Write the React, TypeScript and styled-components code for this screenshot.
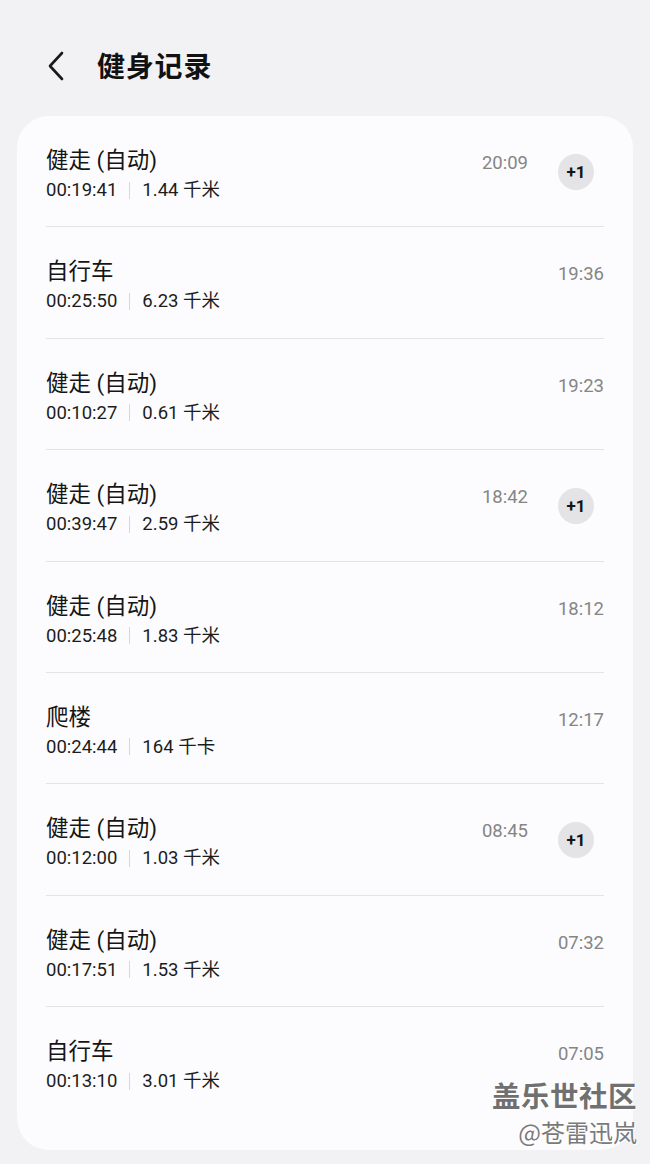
import React from 'react'
import styled, { createGlobalStyle } from 'styled-components'

type Workout = {
  name: string
  duration: string
  amount: string
  time: string
  extra?: number
}

const workouts: Workout[] = [
  { name: '健走 (自动)', duration: '00:19:41', amount: '1.44 千米', time: '20:09', extra: 1 },
  { name: '自行车', duration: '00:25:50', amount: '6.23 千米', time: '19:36' },
  { name: '健走 (自动)', duration: '00:10:27', amount: '0.61 千米', time: '19:23' },
  { name: '健走 (自动)', duration: '00:39:47', amount: '2.59 千米', time: '18:42', extra: 1 },
  { name: '健走 (自动)', duration: '00:25:48', amount: '1.83 千米', time: '18:12' },
  { name: '爬楼', duration: '00:24:44', amount: '164 千卡', time: '12:17' },
  { name: '健走 (自动)', duration: '00:12:00', amount: '1.03 千米', time: '08:45', extra: 1 },
  { name: '健走 (自动)', duration: '00:17:51', amount: '1.53 千米', time: '07:32' },
  { name: '自行车', duration: '00:13:10', amount: '3.01 千米', time: '07:05' },
]

const App = () => (
  <Page>
    <GlobalStyle />
    <Header>
      <BackButton aria-label="返回">
        <svg width="20" height="30" viewBox="0 0 20 30">
          <path d="M16 2 L4 15 L16 28" fill="none" stroke="#1a1a1a" strokeWidth="2.6" strokeLinecap="round" strokeLinejoin="round" />
        </svg>
      </BackButton>
      <Title>健身记录</Title>
    </Header>
    <Card>
      {workouts.map((w, i) => (
        <Row key={i}>
          <Info>
            <Name>{w.name}</Name>
            <Stats>
              <span>{w.duration}</span>
              <Divider />
              <span>{w.amount}</span>
            </Stats>
          </Info>
          <Time>{w.time}</Time>
          {w.extra ? <Badge>+{w.extra}</Badge> : null}
        </Row>
      ))}
    </Card>
    <Watermark>
      <strong>盖乐世社区</strong>
      <span>@苍雷迅岚</span>
    </Watermark>
  </Page>
)

export default App

const GlobalStyle = createGlobalStyle`
  html, body {
    margin: 0;
    padding: 0;
    background: #f2f2f4;
  }
  body {
    font-family: Roboto, "Noto Sans", "Noto Sans CJK SC", sans-serif;
    color: #1a1a1a;
  }
`

const Page = styled.div`
  position: relative;
  width: 650px;
  height: 1164px;
  overflow: hidden;
  background: #f2f2f4;
`

const Header = styled.div`
  display: flex;
  align-items: center;
  height: 134px;
  padding: 0 0 4px 46px;
  box-sizing: border-box;
`

const BackButton = styled.div`
  display: flex;
  align-items: center;
  width: 51px;
  height: 30px;
  margin-top: 2px;
`

const Title = styled.h1`
  margin: 0;
  font-family: "Noto Sans CJK SC", sans-serif;
  font-size: 28px;
  font-weight: 700;
  letter-spacing: 0.8px;
  color: #111;
`

const Card = styled.div`
  margin: -18px 17px 0;
  padding: 0 29px 31px;
  background: #fcfcfe;
  border-radius: 32px;
`

const Row = styled.div`
  display: flex;
  align-items: flex-start;
  height: 111.4px;
  box-sizing: border-box;
  padding-top: 29px;
  border-bottom: 1.5px solid #e4e4e6;

  &:last-child {
    border-bottom: none;
  }
`

const Info = styled.div`
  flex: 1;
  display: flex;
  flex-direction: column;
`

const Name = styled.div`
  font-family: Roboto, "Noto Sans CJK SC", sans-serif;
  font-size: 22.5px;
  line-height: 30px;
  color: #151515;
`

const Stats = styled.div`
  display: flex;
  align-items: center;
  margin-top: 2px;
  font-family: Roboto, "Noto Sans CJK SC", sans-serif;
  font-size: 18.5px;
  line-height: 26px;
  color: #1c1c1c;
`

const Divider = styled.i`
  display: inline-block;
  width: 1px;
  height: 17px;
  margin: 0 12px;
  background: #d8d8da;
`

const Time = styled.div`
  margin-top: 7px;
  font-family: Roboto, sans-serif;
  font-size: 18.5px;
  line-height: 22px;
  color: #858585;
`

const Badge = styled.div`
  display: flex;
  align-items: center;
  justify-content: center;
  width: 36px;
  height: 36px;
  margin: 9px 10px 0 30px;
  border-radius: 50%;
  background: #e4e4e6;
  font-family: Roboto, sans-serif;
  font-size: 17px;
  font-weight: 700;
  color: #151515;
`

const Watermark = styled.div`
  position: absolute;
  right: 13px;
  bottom: 18px;
  display: flex;
  flex-direction: column;
  align-items: flex-end;
  font-family: "Noto Sans CJK SC", sans-serif;
  text-shadow: 0 0 2px #fff, 1px 1px 0 #fff, -1px -1px 0 #fff;

  strong {
    font-size: 28.5px;
    line-height: 34px;
    font-weight: 700;
    color: #707070;
    letter-spacing: 0.5px;
  }

  span {
    margin-top: 6px;
    font-size: 24px;
    line-height: 28px;
    font-weight: 400;
    color: #7a7a7a;
  }
`
